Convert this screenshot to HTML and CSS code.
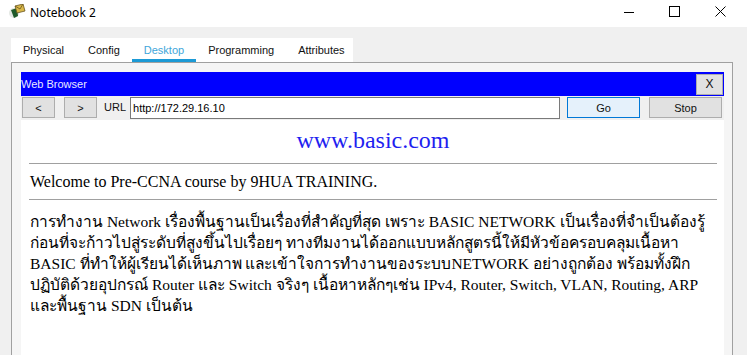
FILE: index.html
```html
<!DOCTYPE html>
<html lang="th">
<head>
  <meta charset="UTF-8" />
  <meta name="viewport" content="width=device-width, initial-scale=1.0"/>
  <title>Notebook 2</title>
  <link rel="stylesheet" href="styles.css">
</head>
<body>
  <div class="titlebar">
    <svg class="app-icon" width="18" height="16" viewBox="0 0 18 16">
      <ellipse cx="6" cy="9" rx="5" ry="5" fill="#e4e8e4"/>
      <path d="M3 6 L9 4 L10 12 L6 14 Z" fill="#1f5a2a"/>
      <path d="M7 2 L15 0 L17 7 L9 9 Z" fill="#d9b84a" stroke="#6a5520" stroke-width="0.8"/>
      <path d="M7 2 L12 5 L15 0" fill="none" stroke="#6a5520" stroke-width="0.8"/>
    </svg>
    <span class="title">Notebook 2</span>
    <div class="controls">
      <svg width="10" height="10" viewBox="0 0 10 10"><path d="M0 5.5 H10" stroke="#000" stroke-width="1"/></svg>
      <svg width="11" height="11" viewBox="0 0 11 11"><rect x="0.5" y="0.5" width="10" height="10" fill="none" stroke="#000" stroke-width="1"/></svg>
      <svg width="11" height="11" viewBox="0 0 11 11"><path d="M0.5 0.5 L10.5 10.5 M10.5 0.5 L0.5 10.5" stroke="#000" stroke-width="1"/></svg>
    </div>
  </div>

  <div class="window">
    <div class="tabs">
      <span class="tab">Physical</span>
      <span class="tab">Config</span>
      <span class="tab active">Desktop</span>
      <span class="tab">Programming</span>
      <span class="tab">Attributes</span>
    </div>

    <div class="panel">
      <div class="browser">
        <div class="bar">
          <span class="bar-title">Web Browser</span>
          <button class="btn close-btn">X</button>
        </div>
        <div class="toolbar">
          <button class="btn nav">&lt;</button>
          <button class="btn nav">&gt;</button>
          <span class="url-label">URL</span>
          <input class="url" type="text" value="http://172.29.16.10">
          <button class="btn go">Go</button>
          <button class="btn stop">Stop</button>
        </div>
        <div class="page">
          <div class="site">www.basic.com</div>
          <hr>
          <p class="welcome">Welcome to Pre-CCNA course by 9HUA TRAINING.</p>
          <hr>
          <p class="desc">การทำงาน Network เรื่องพื้นฐานเป็นเรื่องที่สำคัญที่สุด เพราะ BASIC NETWORK เป็นเรื่องที่จำเป็นต้องรู้<br>ก่อนที่จะก้าวไปสู่ระดับที่สูงขึ้นไปเรื่อยๆ ทางทีมงานได้ออกแบบหลักสูตรนี้ให้มีหัวข้อครอบคลุมเนื้อหา<br>BASIC ที่ทำให้ผู้เรียนได้เห็นภาพ และเข้าใจการทำงานของระบบNETWORK อย่างถูกต้อง พร้อมทั้งฝึก<br>ปฏิบัติด้วยอุปกรณ์ Router และ Switch จริงๆ เนื้อหาหลักๆเช่น IPv4, Router, Switch, VLAN, Routing, ARP<br>และพื้นฐาน SDN เป็นต้น</p>
        </div>
      </div>
    </div>
  </div>
</body>
</html>
```

FILE: styles.css
```css
html, body {
  margin: 0;
  height: 100%;
  overflow: hidden;
}
body {
  background-color: #f0f0f0;
  font-family: 'Liberation Sans', Arial, sans-serif;
  display: flex;
  flex-direction: column;
}
.titlebar {
  height: 27px;
  background-color: white;
  display: flex;
  align-items: center;
  flex-shrink: 0;
}
.app-icon {
  margin-left: 8px;
  margin-top: -3px;
}
.title {
  font-family: 'Noto Sans', sans-serif;
  font-size: 12px;
  color: black;
  margin-left: 4px;
  margin-top: -3px;
}
.controls {
  margin-left: auto;
  display: flex;
  align-items: center;
  gap: 35px;
  margin-right: 21px;
  margin-top: -4px;
}
.window {
  flex: 1;
  padding: 11px 14px 0 11px;
  display: flex;
  flex-direction: column;
}
.tabs {
  width: 342px;
  height: 24px;
  background-color: white;
  display: flex;
}
.tab {
  padding: 0 12px;
  font-size: 11px;
  line-height: 24px;
  color: #111;
  height: 24px;
  box-sizing: border-box;
}
.tab.active {
  color: #3ea6da;
  border-bottom: 3px solid #1c9ad6;
}
.panel {
  flex: 1;
  border-top: 1px solid #a0a0a0;
  border-left: 1px solid #a0a0a0;
  border-right: 1px solid #a0a0a0;
  background-color: #f5f5f5;
  padding: 9px 8px 0 9px;
  display: flex;
  flex-direction: column;
}
.browser {
  flex: 1;
  display: flex;
  flex-direction: column;
}
.bar {
  height: 24px;
  background-color: #0000ff;
  display: flex;
  align-items: center;
}
.bar-title {
  color: #e8e8ff;
  font-size: 11px;
  flex: 1;
}
.btn {
  font-family: 'Liberation Sans', Arial, sans-serif;
  font-size: 11px;
  color: #111;
  background-color: #e1e1e1;
  border: 1px solid #adadad;
  padding: 0;
  margin: 0;
  height: 21px;
}
.close-btn {
  width: 27px;
  margin-right: 1px;
  font-size: 12px;
}
.toolbar {
  height: 23px;
  display: flex;
  align-items: flex-start;
  padding-top: 1px;
  background-color: #f0f0f0;
}
.nav {
  width: 33px;
  margin-left: 1px;
  margin-right: 8px;
}
.url-label {
  font-size: 11px;
  line-height: 21px;
  margin: 0 4px 0 -1px;
  color: #111;
}
.url {
  width: 430px;
  height: 22px;
  box-sizing: border-box;
  border: 1px solid #7a7a7a;
  font-family: 'Liberation Sans', Arial, sans-serif;
  font-size: 11px;
  padding: 0 2px;
  margin: 0 7px 0 0;
  outline: none;
}
.go {
  width: 73px;
  margin-right: 9px;
  background-color: #e5f1fb;
  border-color: #0078d7;
}
.stop {
  width: 73px;
}
.page {
  flex: 1;
  background-color: white;
  padding: 0 7px 0 8px;
  font-family: 'Liberation Serif', 'Times New Roman', serif;
  color: black;
}
.site {
  text-align: center;
  font-size: 24px;
  color: #1f1ff0;
  margin-top: 7px;
  line-height: 26px;
}
hr {
  border: none;
  border-top: 1px solid #a0a0a0;
  height: 0;
  margin: 0;
}
.site + hr {
  margin-top: 10px;
}
.welcome {
  font-size: 16px;
  margin: 9px 0 8px 1px;
  line-height: 18px;
}
.desc {
  font-size: 15.5px;
  line-height: 21px;
  margin: 11px 0 0 1px;
  white-space: nowrap;
}
```
